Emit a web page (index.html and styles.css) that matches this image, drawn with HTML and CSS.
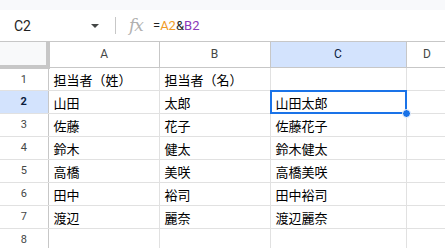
FILE: index.html
```html
<!DOCTYPE html>
<html lang="ja">
<head>
	<meta charset="UTF-8">
	<title>スプレッドシート</title>
	<link rel="stylesheet" href="styles.css">
</head>
<body>
	<div class="topbar"></div>
	<!-- 数式バー -->
	<div class="formula-bar">
		<div class="name-box">
			<span>C2</span>
			<i class="caret"></i>
		</div>
		<div class="sep"></div>
		<span class="fx">fx</span>
		<span class="formula">=<span class="ref-a">A2</span>&amp;<span class="ref-b">B2</span></span>
	</div>
	<!-- シート本体 -->
	<div class="sheet">
		<table>
			<colgroup>
				<col class="c-head">
				<col class="c-a">
				<col class="c-b">
				<col class="c-c">
				<col class="c-d">
			</colgroup>
			<tr class="col-heads">
				<th class="corner"></th>
				<th>A</th>
				<th>B</th>
				<th class="active">C</th>
				<th>D</th>
			</tr>
			<tr><td class="num">1</td><td>担当者（姓）</td><td>担当者（名）</td><td></td><td></td></tr>
			<tr><td class="num active">2</td><td>山田</td><td>太郎</td><td class="sel">山田太郎<span class="handle"></span></td><td></td></tr>
			<tr><td class="num">3</td><td>佐藤</td><td>花子</td><td>佐藤花子</td><td></td></tr>
			<tr><td class="num">4</td><td>鈴木</td><td>健太</td><td>鈴木健太</td><td></td></tr>
			<tr><td class="num">5</td><td>高橋</td><td>美咲</td><td>高橋美咲</td><td></td></tr>
			<tr><td class="num">6</td><td>田中</td><td>裕司</td><td>田中裕司</td><td></td></tr>
			<tr><td class="num">7</td><td>渡辺</td><td>麗奈</td><td>渡辺麗奈</td><td></td></tr>
			<tr><td class="num">8</td><td></td><td></td><td></td><td></td></tr>
		</table>
	</div>
</body>
</html>
```

FILE: styles.css
```css
*{padding:0;margin:0;box-sizing:border-box;}
body{font-family:Roboto,"Liberation Sans",sans-serif;background:#fff;color:#1f1f1f;overflow:hidden;}
.topbar{height:10px;background:#f8f9fb;}

/* 数式バー */
.formula-bar{height:31px;display:flex;align-items:center;}
.name-box{width:115px;display:flex;align-items:center;justify-content:space-between;padding:0 16px 0 14px;font-size:14px;}
.caret{width:0;height:0;border-left:4px solid transparent;border-right:4px solid transparent;border-top:4px solid #444746;}
.sep{width:1px;height:17px;background:#c7c7c7;}
.fx{margin-left:13px;width:17px;font-family:"DejaVu Serif",serif;font-style:italic;font-size:17px;line-height:17px;color:#b0b0b0;letter-spacing:-1px;}
.formula{margin-left:7px;font-size:13px;}
.ref-a{color:#f09b27;}
.ref-b{color:#8a3ab9;}

/* シート */
.sheet{position:relative;overflow:hidden;border-top:1px solid #c7c7c7;}
table{border-collapse:collapse;table-layout:fixed;width:448px;}
.c-head{width:48px;}
.c-a{width:111px;}
.c-b{width:111px;}
.c-c{width:136px;}
.c-d{width:42px;}

th{height:25px;font-weight:normal;font-size:12px;color:#444746;border-right:1px solid #c7c7c7;border-bottom:1px solid #c7c7c7;text-align:center;}
th.active{background:#d3e3fd;color:#0b1d3d;}
th.corner{background:#f8f9fa;border-right:4px solid #c7c7c7;border-bottom:4px solid #c7c7c7;}

td{height:23px;padding:0 5px 2px;border-right:1px solid #e1e1e1;border-bottom:1px solid #e1e1e1;vertical-align:bottom;font-family:"Noto Sans CJK JP",sans-serif;font-size:13px;line-height:17px;color:#000;white-space:nowrap;overflow:hidden;}
td.num{text-align:center;vertical-align:middle;padding:0;font-family:Roboto,sans-serif;font-size:11px;color:#444746;border-right:1px solid #c7c7c7;}
td.num.active{background:#d3e3fd;font-weight:bold;color:#0b1d3d;}

/* 選択セル */
td.sel{position:relative;overflow:visible;}
td.sel::after{content:"";position:absolute;left:-1px;top:-1px;right:-1px;bottom:-1px;border:2px solid #1a73e8;}
.handle{position:absolute;right:-5px;bottom:-5px;width:9px;height:9px;border-radius:50%;background:#1a73e8;border:1px solid #fff;z-index:2;}
```
